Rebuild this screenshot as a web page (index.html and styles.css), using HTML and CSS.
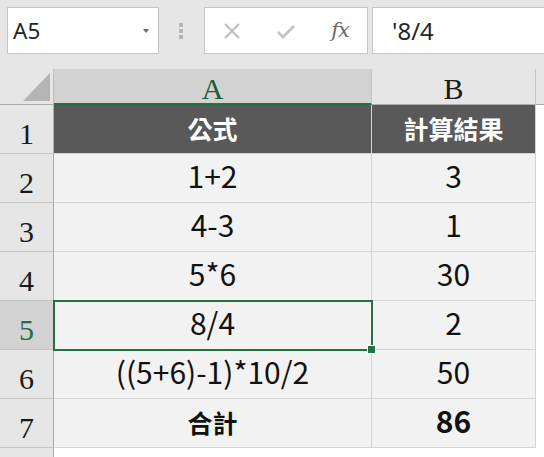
FILE: index.html
```html
<!DOCTYPE html>
<html lang="zh-Hant">
<head>
<meta charset="utf-8">
<title>Sheet</title>
<link rel="stylesheet" href="styles.css">
</head>
<body>
<div class="formula-bar">
  <div class="name-box"><span class="name">A5</span><span class="caret"></span></div>
  <div class="grip"><i></i><i></i><i></i></div>
  <div class="fx-buttons">
    <span class="slot"><svg class="icon" width="18" height="18" viewBox="0 0 18 18"><path d="M2 2 L16 16 M16 2 L2 16" stroke="#bdbdbd" stroke-width="2" fill="none"/></svg></span>
    <span class="slot"><svg class="icon check" width="20" height="16" viewBox="0 0 20 16"><path d="M2 8 L7 13 L18 2" stroke="#c4c4c4" stroke-width="2.8" fill="none"/></svg></span>
    <span class="slot"><span class="fx">fx</span></span>
  </div>
  <div class="formula-input">'8/4</div>
</div>
<div class="sheet">
  <div class="corner"><svg width="53" height="35" viewBox="0 0 53 35"><polygon points="23,32 50,32 50,4" fill="#b4b4b4"/></svg></div>
  <div class="col-head active">A</div>
  <div class="col-head">B</div>
  <div class="col-head rest"></div>

  <div class="row-head">1</div>
  <div class="cell title">公式</div>
  <div class="cell title">計算結果</div>
  <div class="blank"></div>

  <div class="row-head">2</div>
  <div class="cell">1+2</div>
  <div class="cell">3</div>
  <div class="blank"></div>

  <div class="row-head">3</div>
  <div class="cell">4-3</div>
  <div class="cell">1</div>
  <div class="blank"></div>

  <div class="row-head">4</div>
  <div class="cell">5*6</div>
  <div class="cell">30</div>
  <div class="blank"></div>

  <div class="row-head active">5</div>
  <div class="cell selected">8/4<span class="handle"></span></div>
  <div class="cell">2</div>
  <div class="blank"></div>

  <div class="row-head">6</div>
  <div class="cell">((5+6)-1)*10/2</div>
  <div class="cell">50</div>
  <div class="blank"></div>

  <div class="row-head">7</div>
  <div class="cell label">合計</div>
  <div class="cell total">86</div>
  <div class="blank"></div>

  <div class="row-head empty"></div>
  <div class="blank"></div>
  <div class="blank"></div>
  <div class="blank"></div>
</div>
</body>
</html>
```
FILE: styles.css
```css
* { box-sizing: border-box; }
html, body { margin: 0; padding: 0; }
body {
  width: 544px;
  height: 457px;
  overflow: hidden;
  background: #ffffff;
  font-family: "Noto Sans", sans-serif;
}

/* formula bar */
.formula-bar {
  display: flex;
  align-items: flex-start;
  height: 69px;
  padding: 7px 0 0 7px;
  background: #e6e6e6;
}
.name-box {
  width: 152px;
  height: 47px;
  flex: none;
  background: #fff;
  border: 1px solid #c6c6c6;
  display: flex;
  align-items: center;
  justify-content: space-between;
  padding: 0 9px 0 5px;
}
.name { font-size: 22.5px; color: #262626; }
.caret {
  width: 0; height: 0;
  border-left: 3.5px solid transparent;
  border-right: 3.5px solid transparent;
  border-top: 4px solid #6a6a6a;
}
.grip {
  width: 45px;
  height: 47px;
  flex: none;
  display: flex;
  flex-direction: column;
  align-items: center;
  justify-content: center;
  gap: 2px;
  padding-right: 2px;
}
.grip i { display: block; width: 4px; height: 4px; background: #b5b5b5; }
.fx-buttons {
  width: 164px;
  height: 47px;
  flex: none;
  background: #fff;
  border: 1px solid #c6c6c6;
  display: flex;
  align-items: center;
}
.slot {
  width: 54px;
  height: 45px;
  display: flex;
  align-items: center;
  justify-content: center;
}
.check { margin-top: 3px; }
.fx {
  font-family: "DejaVu Serif", serif;
  font-style: italic;
  font-size: 21px;
  color: #6a6a6a;
  margin-top: -2px;
  letter-spacing: -1px;
}
.formula-input {
  flex: 1;
  margin-left: 4px;
  margin-right: -20px;
  height: 47px;
  background: #fff;
  border: 1px solid #c6c6c6;
  display: flex;
  align-items: center;
  padding-left: 19px;
  font-size: 24px;
  color: #262626;
}

/* sheet grid */
.sheet {
  display: grid;
  grid-template-columns: 54px 318px 164px 1fr;
  grid-template-rows: 36px repeat(7, 49px) 1fr;
  height: 388px;
}
.corner {
  background: #e6e6e6;
  border-right: 1px solid #bcbcbc;
  border-bottom: 1px solid #ababab;
}
.corner svg { display: block; }
.col-head {
  background: #e6e6e6;
  border-right: 1px solid #c6c6c6;
  border-bottom: 1px solid #ababab;
  font-family: "Liberation Serif", serif;
  font-size: 30px;
  color: #1a1a1a;
  display: flex;
  align-items: center;
  justify-content: center;
  padding-top: 5px;
}
.col-head.active {
  background: #d2d2d2;
  color: #1f5a3c;
  border-bottom: 2px solid #217346;
}
.col-head.rest { border-right: none; }

.row-head {
  background: #e6e6e6;
  border-right: 1px solid #ababab;
  border-bottom: 1px solid #c6c6c6;
  font-family: "Liberation Serif", serif;
  font-size: 30px;
  color: #1a1a1a;
  display: flex;
  align-items: center;
  justify-content: center;
  padding-top: 10px;
}
.row-head.active { background: #d2d2d2; color: #2a6a4c; }
.row-head.empty { border-bottom: none; }

.cell {
  background: #f2f2f2;
  border-right: 1px solid #d4d4d4;
  border-bottom: 1px solid #d4d4d4;
  font-family: "Noto Sans CJK TC", "Noto Sans", sans-serif;
  font-size: 30px;
  color: #111;
  display: flex;
  align-items: center;
  justify-content: center;
  padding-bottom: 6px;
  white-space: nowrap;
}
.cell.title {
  background: #595959;
  color: #fff;
  font-weight: 700;
  font-size: 25px;
  padding-bottom: 2px;
}
.cell.label { font-weight: 700; font-size: 25px; padding-bottom: 2px; }
.cell.total { font-weight: 700; }
.blank { background: #fff; }

.cell.selected { position: relative; }
.cell.selected::after {
  content: "";
  position: absolute;
  top: -1px; left: -1px; right: -2px; bottom: -2px;
  border: 2px solid #217346;
  pointer-events: none;
}
.handle {
  position: absolute;
  right: -5px;
  bottom: -5px;
  width: 9px;
  height: 9px;
  background: #217346;
  border: 1px solid #fff;
  z-index: 2;
}
```
